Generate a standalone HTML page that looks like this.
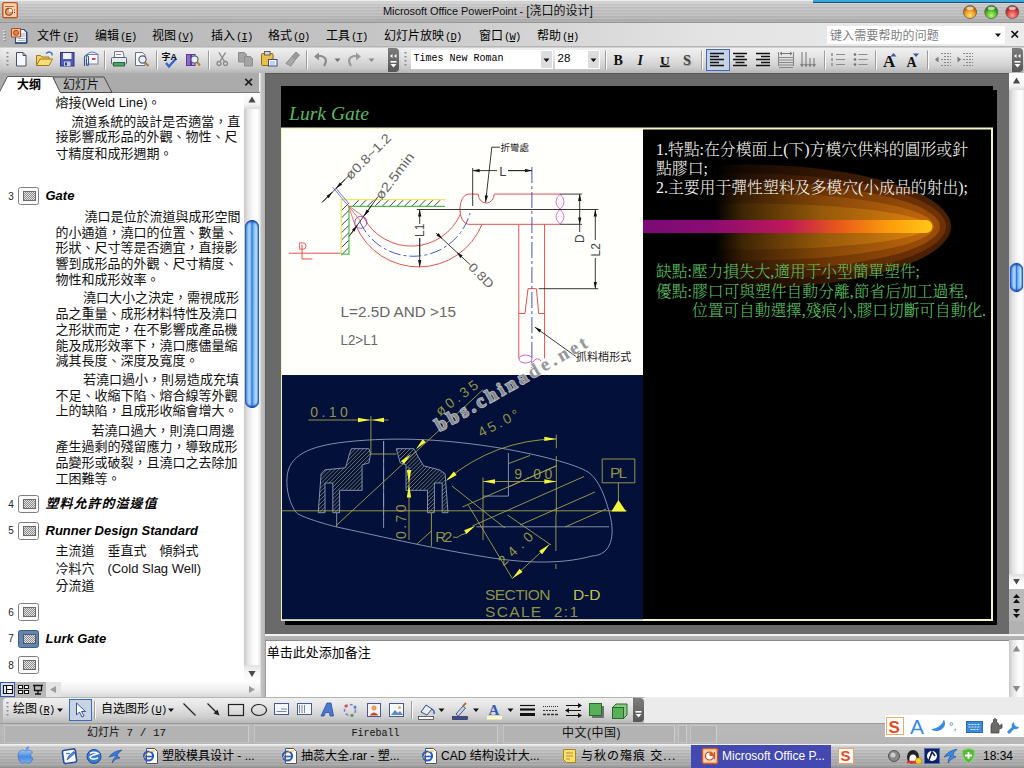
<!DOCTYPE html>
<html lang="zh">
<head>
<meta charset="utf-8">
<title>Microsoft Office PowerPoint - [浇口的设计]</title>
<style>
*{box-sizing:border-box;margin:0;padding:0}
html,body{width:1024px;height:768px;overflow:hidden}
body{position:relative;background:#b4b4b4;font-family:"Liberation Sans","Noto Sans CJK SC",sans-serif;font-size:12px;color:#000}
.abs{position:absolute}
#title{left:0;top:0;width:1024px;height:23px;background:linear-gradient(#f2f2f2 0,#d2d2d2 2px,#c4c4c4 7px,#bbbbbb 16px,#adadad 21px,#969696 23px)}
#title .t{position:absolute;left:383px;top:4px;white-space:nowrap;font-size:11.5px;line-height:15px;color:#111;letter-spacing:0.2px}
.tl{position:absolute;top:5px;width:14px;height:14px;border-radius:50%}
#menu{left:0;top:23px;width:1024px;height:23px;background:linear-gradient(90deg,#b4b4b4 0,#c4c4c4 35%,#e4e4e4 70%,#ececec 100%)}
#menu span.m{position:absolute;top:5.5px;font-size:12px;line-height:15px;white-space:nowrap}
#tb{left:0;top:46px;width:1024px;height:27px;background:linear-gradient(#b4b4b4 0,#b4b4b4 1px,#ececec 2px,#e0e0e0 10px,#c2c2c2 24px,#b0b0b0 27px)}
#left{left:0;top:73px;width:260px;height:624px;background:#ababab}
#outline{left:0;top:92px;width:244px;height:590px;background:#fff;overflow:hidden}
#slidepane{left:265px;top:73px;width:744px;height:561px;background:#6a6a6a;border-top:1px solid #585858;border-left:1px solid #606060}
#notes{left:265px;top:640px;width:744px;height:57px;background:#fff;border-top:1px solid #8c8c8c;border-left:1px solid #a0a0a0}
#draw{left:0;top:697px;width:1024px;height:26px;background:linear-gradient(90deg,#b4b4b4 0,#b4b4b4 644px,#ebebeb 644px)}
#status{left:0;top:723px;width:1024px;height:21px;background:linear-gradient(#9c9c9c 0,#9c9c9c 1px,#b9b9b9 1px,#b6b6b6 100%)}
#task{left:0;top:744px;width:1024px;height:24px;background:linear-gradient(#f2f2f2 0,#f2f2f2 1px,#cfcfcf 2px,#bcbcbc 8px,#adadad 16px,#a4a4a4 22px,#8a8a8a 24px)}

.ol{position:absolute;white-space:nowrap;font:13px/16px "Liberation Sans","Noto Sans CJK TC",sans-serif;color:#111;font-weight:400}
.on{position:absolute;left:7px;width:8px;text-align:center;font:10px/11px "Liberation Sans",sans-serif;color:#222}
.oi{position:absolute;left:18px;width:21px;height:18px;margin-top:-0.7px;border:1px solid #7e7e7e;border-radius:2.5px;background:#fbfbfb}
.oi i{position:absolute;left:3.5px;top:3px;width:13px;height:10px;border:1px solid #6a6a6a;background:conic-gradient(#8c8c8c 25%,#e4e4e4 0 50%,#8c8c8c 0 75%,#e4e4e4 0) 0 0/2px 2px}
.oi.sel{background:#6486ae;border-color:#3c5c86}
.oi.sel i{border-color:#4a5a70}
.oh{position:absolute;left:45.5px;white-space:nowrap;font:italic bold 13px/16px "Liberation Sans","Noto Sans CJK TC",sans-serif;color:#000}

#menu span.m b{font-weight:400;font-family:"Liberation Mono",monospace;font-size:10.5px;letter-spacing:-0.8px;margin-left:1px}
#menu span.m u{text-decoration:underline}

.dt{top:5px;font-size:12px;line-height:15px;white-space:nowrap}
.dt b{font-weight:400;font-family:"Liberation Mono",monospace;font-size:10.5px;letter-spacing:-0.8px;margin-left:1px}
.sp{position:absolute;top:2px;height:18px;border:1px solid;border-color:#c8c8c8 #cdcdcd #c0c0c0 #c4c4c4;background:#b3b3b3}
.st{top:3px;font-size:12px;line-height:15px;white-space:nowrap;color:#111}
.tk{top:4px;font-size:12px;line-height:16px;white-space:nowrap;color:#000}
#title .t1{font-size:11px;letter-spacing:-0.07px}
#title .t2{font-size:12px;letter-spacing:0}
.streak{position:absolute;left:0;top:0;width:100%;height:100%;background:repeating-linear-gradient(rgba(255,255,255,.10) 0,rgba(255,255,255,.10) 1px,rgba(0,0,0,.035) 1px,rgba(0,0,0,.035) 2px,rgba(255,255,255,0) 2px,rgba(255,255,255,0) 3px);pointer-events:none}
</style>
</head>
<body>
<div id="title" class="abs"><div class="streak"></div><span class="t"><span class="t1">Microsoft Office PowerPoint - </span><span class="t2">[浇口的设计]</span></span>
<svg class="abs" style="left:0;top:0" width="1024" height="23" viewBox="0 0 1024 23">
<defs>
<radialGradient id="gO" cx="0.5" cy="0.75" r="0.6"><stop offset="0" stop-color="#ffe070"/><stop offset="0.6" stop-color="#f0a020"/><stop offset="1" stop-color="#b06008"/></radialGradient>
<radialGradient id="gG" cx="0.5" cy="0.75" r="0.6"><stop offset="0" stop-color="#b8f878"/><stop offset="0.6" stop-color="#58c028"/><stop offset="1" stop-color="#2a7a10"/></radialGradient>
<radialGradient id="gR" cx="0.5" cy="0.75" r="0.6"><stop offset="0" stop-color="#ffa090"/><stop offset="0.6" stop-color="#e04848"/><stop offset="1" stop-color="#982020"/></radialGradient>
</defs>
<rect x="813" y="0" width="211" height="2" fill="#38a8d8"/><rect x="813" y="2" width="211" height="1" fill="#1c4c78"/>
<rect x="2.800" y="2.600" width="14.500" height="15.200" rx="1.200" fill="#f8d4b4" stroke="#c4541c" stroke-width="1.400"/><path d="M5,6.500h9" stroke="#c4541c" stroke-width="0.900"/><circle cx="9" cy="11.800" r="3.400" fill="#e8a070" stroke="#9c3c10" stroke-width="1.100"/><path d="M9,11.800 V8.400 A3.400,3.400 0 0 1 12.400,11.800z" fill="#fff"/><path d="M14.500,9.500v1M14.500,12v1" stroke="#7a3010" stroke-width="1"/>
<g stroke="#666" stroke-width="0.8"><circle cx="970" cy="12" r="6.6" fill="url(#gO)"/><circle cx="991.3" cy="12" r="6.6" fill="url(#gG)"/><circle cx="1012.3" cy="12" r="6.6" fill="url(#gR)"/></g>
<g fill="#fff" fill-opacity="0.65"><ellipse cx="970" cy="8.3" rx="3.6" ry="1.8"/><ellipse cx="991.3" cy="8.3" rx="3.6" ry="1.8"/><ellipse cx="1012.3" cy="8.3" rx="3.6" ry="1.8"/></g>
</svg></div>
<div id="menu" class="abs">
<svg class="abs" style="left:0;top:0" width="40" height="23" viewBox="0 0 40 23"><path d="M4,7v1M4,10v1M4,13v1M4,16v1" stroke="#f0f0f0" stroke-width="1.600"/><path d="M5,8v1M5,11v1M5,14v1M5,17v1" stroke="#777" stroke-width="1.200"/><path d="M15.500,6.500 h8.500 l2.500,2.500 v11 h-11z" fill="#f4f8ff" stroke="#34507c" stroke-width="1.200"/><path d="M15,20 h12 M26.800,9 v11" stroke="#2c4670" stroke-width="1.400"/><path d="M21,11h4M21,13h4M18,15.500h7M18,17.500h7" stroke="#88a0d0" stroke-width="0.800"/><rect x="11.500" y="5.500" width="9" height="8.500" rx="0.800" fill="#f4c4a0" stroke="#b84818" stroke-width="1.200"/><circle cx="16" cy="9.800" r="2.600" fill="#e08050" stroke="#9c3c10" stroke-width="0.800"/></svg>
<span class="m" style="left:37px">文件<b>(<u>F</u>)</b></span>
<span class="m" style="left:95px">编辑<b>(<u>E</u>)</b></span>
<span class="m" style="left:152px">视图<b>(<u>V</u>)</b></span>
<span class="m" style="left:211px">插入<b>(<u>I</u>)</b></span>
<span class="m" style="left:268px">格式<b>(<u>O</u>)</b></span>
<span class="m" style="left:326px">工具<b>(<u>T</u>)</b></span>
<span class="m" style="left:384px">幻灯片放映<b>(<u>D</u>)</b></span>
<span class="m" style="left:479px">窗口<b>(<u>W</u>)</b></span>
<span class="m" style="left:537px">帮助<b>(<u>H</u>)</b></span>
<div class="abs" style="left:827px;top:3px;width:178px;height:18px;background:#fff"></div>
<span class="m" style="left:830px;color:#808080;letter-spacing:0.1px">键入需要帮助的问题</span>
<svg class="abs" style="left:990px;top:0" width="34" height="23" viewBox="0 0 34 23"><path d="M5,10.500 h6 l-3,3.500z" fill="#111"/><path d="M21.500,8 l6.500,6.500 m0,-6.500 l-6.500,6.500" stroke="#111" stroke-width="1.7" fill="none"/></svg>
</div>

<div id="tb" class="abs">
<div class="abs" style="left:3px;top:2px;width:396px;height:25px;border-radius:4px 0 0 3px;background:linear-gradient(#efefef,#e2e2e2 35%,#cdcdcd 75%,#b6b6b6)"></div>
<div class="abs" style="left:388px;top:2px;width:11px;height:24px;border-radius:0 4px 4px 0;background:linear-gradient(#7c7c7c,#565656)"></div>
<div class="abs" style="left:401px;top:2px;width:623px;height:25px;border-radius:4px 0 0 3px;background:linear-gradient(#f0f0f0,#e4e4e4 35%,#cfcfcf 75%,#b6b6b6)"></div>
<div class="abs" style="left:1012px;top:2px;width:11px;height:24px;border-radius:0 4px 4px 0;background:linear-gradient(#7c7c7c,#565656)"></div>
<div class="abs" style="left:411px;top:4px;width:142px;height:19px;background:#fff"></div>
<div class="abs" style="left:555px;top:4px;width:45px;height:19px;background:#fff"></div>
<div class="abs" style="left:541px;top:5px;width:11px;height:17px;background:#dcdcdc"></div>
<div class="abs" style="left:588px;top:5px;width:11px;height:17px;background:#dcdcdc"></div>
<div class="abs" style="left:705.5px;top:3px;width:24px;height:22px;background:#c6d2e2;border:1px solid #3b6bbd"></div>
<div class="abs" style="left:413.5px;top:6px;font:10px/14px 'Liberation Mono',monospace;color:#000;white-space:nowrap">Times New Roman</div>
<div class="abs" style="left:557.5px;top:5px;font:11.5px/15px 'Liberation Sans',sans-serif;color:#000">28</div>
<svg class="abs" style="left:0;top:0" width="1024" height="27" viewBox="0 46 1024 27">
<g fill="none">
<path d="M7.5,52v1.500M7.500,56v1.500M7.500,60v1.500M7.500,64v1.500M405.500,52v1.500M405.500,56v1.500M405.500,60v1.500M405.500,64v1.500" stroke="#8a8a8a" stroke-width="2"/>
<!-- new -->
<path d="M16.500,52.500 h6.500 l3,3 v10.500 h-9.500z" fill="#f6f9ff" stroke="#46506c"/><path d="M23,52.500 v3 h3" stroke="#46506c"/>
<!-- open -->
<path d="M36.500,65.500 v-10 h4 l1.500,1.500 h7 v2" fill="#f6d060" stroke="#a07818"/><path d="M36.500,65.500 l3.500,-6.500 h12.500 l-3.500,6.500z" fill="#f8dc78" stroke="#a07818"/><path d="M46,53.500 q3.500,-3 6,0 l0,2" stroke="#3a6aa8" stroke-width="1.300"/>
<!-- save -->
<rect x="60.500" y="52.500" width="13.500" height="13.500" fill="#5058b4" stroke="#2c3480"/><rect x="63" y="53" width="8.500" height="6" fill="#f0f2fa"/><rect x="64" y="61.500" width="6.500" height="4.500" fill="#c8ccec"/><rect x="65" y="62.500" width="2" height="3" fill="#30388c"/>
<!-- mail -->
<rect x="86.500" y="54.500" width="11.500" height="9.500" fill="#f8f8fc" stroke="#7080a8"/><path d="M86.500,54.500 q5.500,-5 11.500,0" stroke="#7080a8"/><rect x="92" y="58" width="3.500" height="2" fill="#d84040"/><path d="M84.500,66 v-8.500 a2,2 0 0 1 4,0 v7 a1,1 0 0 1 -2,0 v-6" stroke="#3a5890" stroke-width="1.100"/>
<path d="M104.500,50.500 v19 M156.500,50.500 v19 M208.500,50.500 v19 M306.500,50.500 v19" stroke="#9c9c9c"/><path d="M105.500,50.500 v19 M157.500,50.500 v19 M209.500,50.500 v19 M307.500,50.500 v19" stroke="#fafafa"/>
<!-- print -->
<path d="M114.500,57 v-5.500 h8.500 l1,5.500" fill="#fdfdfd" stroke="#70788c"/><rect x="111.500" y="57.500" width="15" height="6.500" rx="1" fill="#e4e8f0" stroke="#586078"/><rect x="113.500" y="62.500" width="11" height="3.500" fill="#48a868" stroke="#2a6840"/><path d="M116,54.500 h5" stroke="#8890a0"/>
<!-- preview -->
<path d="M135.500,52.500 h7 l2.500,2.500 v10.500 h-9.500z" fill="#f8faff" stroke="#687088"/><circle cx="142.500" cy="59.500" r="3.600" fill="#e8f0fc" stroke="#505870" stroke-width="1.100"/><path d="M145,62.500 l3.500,3.500" stroke="#b07828" stroke-width="2"/>
<!-- spell -->
<path d="M166,63 l3,3.500 l7,-8" stroke="#3a62c8" stroke-width="2.400"/>
<!-- research -->
<rect x="186.500" y="54.500" width="4" height="11" fill="#8c6cc8" stroke="#5a3c98"/><rect x="191.500" y="54.500" width="3.500" height="11" fill="#b4a0e0" stroke="#5a3c98"/><circle cx="194.500" cy="59.500" r="3.500" fill="#e4f0fc" stroke="#586078" stroke-width="1.100"/><path d="M197,62 l3,3.500" stroke="#b88020" stroke-width="2"/>
<!-- cut -->
<path d="M219,52.500 l5.500,9 M225.500,52.500 l-5.500,9" stroke="#8a8a8a" stroke-width="1.400"/><circle cx="219" cy="63.500" r="2" stroke="#8a8a8a" stroke-width="1.300"/><circle cx="225.500" cy="63.500" r="2" stroke="#8a8a8a" stroke-width="1.300"/>
<!-- copy -->
<path d="M238.500,52.500 h6 l2,2 v7.500 h-8z" fill="#a4a4a4" stroke="#8c8c8c"/><path d="M244.500,56.500 h6 l2,2 v7.500 h-8z" fill="#a4a4a4" stroke="#8c8c8c"/>
<!-- paste -->
<rect x="261.500" y="53.500" width="11.500" height="12" rx="1" fill="#e8c048" stroke="#8c6c14"/><rect x="264.500" y="51.500" width="5.500" height="3.500" fill="#d8d8d8" stroke="#606060"/><rect x="268.500" y="59.500" width="8.500" height="6.500" fill="#f4f8ff" stroke="#3a4a8c"/><path d="M270,62h5M270,64h5" stroke="#8098d0" stroke-width="0.800"/>
<!-- format painter -->
<path d="M296,52 l3.500,3 l-4,4.500 l-3.500,-3z" fill="#9a9a9a" stroke="#8a8a8a"/><path d="M292,56.500 l3.500,3 l-4.500,6.500 l-5,-2.500z" fill="#a8a8a8" stroke="#8c8c8c"/>
<!-- undo / redo -->
<path d="M324,66 q5,-8 -3,-10 l-3,0" stroke="#8c8c8c" stroke-width="2.200"/><path d="M314,56.500 l5,-4 v8z" fill="#8c8c8c"/><path d="M334.500,58.500 h6 l-3,3.500z" fill="#707070"/>
<path d="M351,66 q-5,-8 3,-10 l3,0" stroke="#9a9a9a" stroke-width="2.200"/><path d="M361,56.500 l-5,-4 v8z" fill="#9a9a9a"/><path d="M368.500,58.500 h6 l-3,3.500z" fill="#8a8a8a"/>
<!-- overflow chevrons -->
<g fill="#fff"><path d="M390,56 l2.500,-2 v4z M394,56 l2.500,-2 v4z M1014,56 l2.500,-2 v4z M1018,56 l2.500,-2 v4z"/><rect x="390.500" y="61" width="6" height="1.600"/><path d="M390.500,64 h6 l-3,3.500z"/><rect x="1014.500" y="61" width="6" height="1.600"/><path d="M1014.500,64 h6 l-3,3.500z"/></g>
<path d="M543.500,58.500 h6 l-3,3.500z M590.500,58.500 h6 l-3,3.500z" fill="#111"/>
<path d="M605.500,50.500 v19 M701.500,50.500 v19 M824.500,50.500 v19 M875.500,50.500 v19 M927.500,50.500 v19" stroke="#9c9c9c"/><path d="M606.500,50.500 v19 M702.500,50.500 v19 M825.500,50.500 v19 M876.500,50.500 v19 M928.500,50.500 v19" stroke="#fafafa"/>
<!-- align icons -->
<path d="M710,53.500h14M710,56.500h9M710,59.500h14M710,62.500h9M710,65.500h14" stroke="#111" stroke-width="1.300"/>
<path d="M733,53.500h14M735.500,56.500h9M733,59.500h14M735.500,62.500h9M733,65.500h14" stroke="#111" stroke-width="1.300"/>
<path d="M756,53.500h14M761,56.500h9M756,59.500h14M761,62.500h9M756,65.500h14" stroke="#111" stroke-width="1.300"/>
<path d="M779,57.500h14M779,60h14M779,62.500h14M779,65h14M779,67.500h14 M778.500,52v14 M793.500,52v14" stroke="#8a8a8a" stroke-width="1.100"/><path d="M780,53.500 h12 M782,52 l-2,1.500 l2,1.500 M790,52 l2,1.500 l-2,1.500" stroke="#777" stroke-width="1"/>
<path d="M802,52v14M806,52v14M810,58v8 M800.500,64 l1.500,2.500 l1.500,-2.500 M804.500,64 l1.500,2.500 l1.500,-2.500 M808.500,64 l1.500,2.500 l1.500,-2.500 M814,58v8 M812.500,64 l1.500,2.500 l1.500,-2.500" stroke="#808080" stroke-width="1.100"/>
<!-- lists -->
<path d="M836,54.500h9M836,59.500h9M836,64.500h9" stroke="#8c8c8c" stroke-width="1.200"/><path d="M832,53v3M832,58v3M832,63v3" stroke="#808080" stroke-width="1.300"/>
<path d="M858.500,54.500h9M858.500,59.500h9M858.500,64.500h9" stroke="#8c8c8c" stroke-width="1.200"/><circle cx="855" cy="54.500" r="1.300" fill="#707070"/><circle cx="855" cy="59.500" r="1.300" fill="#707070"/><circle cx="855" cy="64.500" r="1.300" fill="#707070"/>
<path d="M893.500,53 l3,3.500 h-6z" fill="#3a5a9c"/><path d="M913,57 l3,-3.500 h-6z" fill="#3a5a9c" transform="translate(3,0)"/>
<!-- indent -->
<path d="M941,53.500h10M944,56.500h7M941,59.500h10M944,62.500h7M941,65.500h10" stroke="#8a8a8a" stroke-width="1.200" stroke-dasharray="2 1"/><path d="M938.500,56.500 l-3.500,3 l3.500,3z" fill="#7a7a7a"/>
<path d="M963,53.500h10M966,56.500h7M963,59.500h10M966,62.500h7M963,65.500h10" stroke="#8a8a8a" stroke-width="1.200" stroke-dasharray="2 1"/><path d="M957.500,56.500 l3.500,3 l-3.500,3z" fill="#7a7a7a"/>
</g>
<g font-family="'Liberation Serif',serif" font-weight="bold" fill="#111">
<text x="613.500" y="65" font-size="14">B</text>
<text x="637.500" y="65" font-size="14" font-style="italic">I</text>
<text x="660" y="64.500" font-size="13.500" text-decoration="underline">U</text>
<text x="683" y="65" font-size="14" fill="#444" style="text-shadow:1px 1px 1px #999">S</text>
<text x="883" y="67" font-size="17">A</text>
<text x="906.500" y="67" font-size="14">A</text>
<text x="161.500" y="59.500" font-size="9" font-family="'Liberation Sans','Noto Sans CJK SC',sans-serif">字A</text>
</g>
<path d="M660,66.500 h9" stroke="#111" stroke-width="1.200"/>
</svg>
</div>

<div id="left" class="abs"></div>
<div id="outline" class="abs" lang="zh-TW">
<div class="ol" style="top:3.1px;left:55.4px">熔接(Weld Line)。</div>
<div class="ol" style="top:21.7px;left:71.2px">流道系統的設計是否適當，直</div>
<div class="ol" style="top:37.4px;left:55.4px">接影響成形品的外觀、物性、尺</div>
<div class="ol" style="top:53.7px;left:55.4px">寸精度和成形週期。</div>
<div class="ol" style="top:117.2px;left:84.4px">澆口是位於流道與成形空間</div>
<div class="ol" style="top:132.8px;left:55.4px">的小通道，澆口的位置、數量、</div>
<div class="ol" style="top:148.3px;left:55.4px">形狀、尺寸等是否適宜，直接影</div>
<div class="ol" style="top:163.9px;left:55.4px">響到成形品的外觀、尺寸精度、</div>
<div class="ol" style="top:179.7px;left:55.4px">物性和成形效率。</div>
<div class="ol" style="top:197.7px;left:83.0px">澆口大小之決定，需視成形</div>
<div class="ol" style="top:213.5px;left:55.4px">品之重量、成形材料特性及澆口</div>
<div class="ol" style="top:229.6px;left:55.4px">之形狀而定，在不影響成產品機</div>
<div class="ol" style="top:245.5px;left:55.4px">能及成形效率下，澆口應儘量縮</div>
<div class="ol" style="top:261.4px;left:55.4px">減其長度、深度及寬度。</div>
<div class="ol" style="top:279.9px;left:83.0px">若澆口過小，則易造成充填</div>
<div class="ol" style="top:295.6px;left:55.4px">不足、收縮下陷、熔合線等外觀</div>
<div class="ol" style="top:311.4px;left:55.4px">上的缺陷，且成形收縮會增大。</div>
<div class="ol" style="top:331.4px;left:91.6px">若澆口過大，則澆口周邊</div>
<div class="ol" style="top:347.2px;left:55.4px">產生過剩的殘留應力，導致成形</div>
<div class="ol" style="top:362.9px;left:55.4px">品變形或破裂，且澆口之去除加</div>
<div class="ol" style="top:378.7px;left:55.4px">工困難等。</div>
<div class="ol" style="top:450.9px;left:55.4px">主流道　垂直式　傾斜式</div>
<div class="ol" style="top:468.6px;left:55.4px">冷料穴　(Cold Slag Well)</div>
<div class="ol" style="top:486.2px;left:55.4px">分流道</div>
<div class="on" style="top:98.8px">3</div><div class="oi" style="top:95.8px"><i></i></div>
<div class="oh" style="top:96.3px">Gate</div>
<div class="on" style="top:406.7px">4</div><div class="oi" style="top:403.7px"><i></i></div>
<div class="oh" style="top:404.2px;letter-spacing:1px">塑料允許的溢邊值</div>
<div class="on" style="top:433.4px">5</div><div class="oi" style="top:430.4px"><i></i></div>
<div class="oh" style="top:430.9px">Runner Design Standard</div>
<div class="on" style="top:514.7px">6</div><div class="oi" style="top:511.7px"><i></i></div>
<div class="on" style="top:541.3px">7</div><div class="oi sel" style="top:538.3px"><i></i></div>
<div class="oh" style="top:538.8px">Lurk Gate</div>
<div class="on" style="top:568.0px">8</div><div class="oi" style="top:565.0px"><i></i></div>
</div>
<div class="abs" style="left:244px;top:92px;width:16px;height:590px;background:linear-gradient(90deg,#c8c8c8 0,#e4e4e4 25%,#fafafa 60%,#fff 85%,#e8e8e8 100%)"></div>
<div class="abs" style="left:244px;top:92px;width:16px;height:17px;background:linear-gradient(#fff,#f4f4f4 70%,#dcdcdc)"></div>
<svg class="abs" style="left:244px;top:92px" width="16" height="17"><path d="M8,4.5 L11.6,10.5 H4.4z" fill="#4a4a4a"/></svg>
<svg class="abs" style="left:0;top:73px" width="260" height="20" viewBox="0 0 260 20">
<path d="M0,19.5 H260" stroke="#7a7a7a" stroke-width="1"/>
<path d="M59.5,19.5 L59.5,19 L53,4 H104 L112,19.5z" fill="#b3b3b3" stroke="#4a4a4a" stroke-width="1"/>
<path d="M-1,20 L7.5,3.500 H52.5 L60.5,20z" fill="#fff" stroke="#5a5a5a" stroke-width="1"/>
<rect x="0" y="19" width="60" height="1.5" fill="#fff"/>
<text x="17" y="16" font-family="'Liberation Sans','Noto Sans CJK SC',sans-serif" font-weight="bold" font-size="12" fill="#000">大纲</text>
<text x="63" y="16" font-family="'Liberation Sans','Noto Sans CJK SC',sans-serif" font-size="12" fill="#111">幻灯片</text>
<path d="M245.300,5.800 l6.700,6.600 m0,-6.600 l-6.700,6.600" stroke="#222" stroke-width="1.700" fill="none"/><path d="M259.500,0 V19" stroke="#f4f4f4" stroke-width="1"/>
</svg>
<div class="abs" style="left:244px;top:665px;width:16px;height:17px;background:linear-gradient(#e0e0e0,#f6f6f6 40%,#fff)"></div>
<svg class="abs" style="left:244px;top:665px" width="16" height="17"><path d="M8,12 L11.6,6 H4.4z" fill="#4a4a4a"/></svg>
<div class="abs" style="left:245px;top:220px;width:14px;height:188px;border-radius:7px;background:linear-gradient(90deg,#2a52b8 0,#5a9cf0 10%,#b4dcfc 30%,#7ab4f4 42%,#3474e4 50%,#6cb0f6 60%,#b8e4fe 80%,#6aa4ea 92%,#2a52b0 100%);box-shadow:inset 0 2px 2px #2048a8,inset 0 -2px 2px #2048a8"></div>
<div class="abs" style="left:0;top:682px;width:260px;height:15px;background:linear-gradient(#fdfdfd,#ececec 60%,#d8d8d8)"></div>
<div class="abs" style="left:0;top:682px;width:46px;height:15px;background:#b9b9b9"></div>
<svg class="abs" style="left:0;top:682px" width="260" height="15" viewBox="0 0 260 15">
<rect x="0.5" y="0.5" width="14" height="14" fill="#d4e0f0" stroke="#3a5a94"/>
<path d="M3.5,3.5 h9 v8 h-9z M6.5,3.5 v8 M6.5,7.5 h6" fill="#fff" stroke="#111" stroke-width="1.2"/>
<path d="M18.5,3.5 h4 v3 h-4z M24.5,3.5 h4 v3 h-4z M18.5,8.5 h4 v3 h-4z M24.5,8.5 h4 v3 h-4z" fill="#fff" stroke="#111" stroke-width="1.1"/>
<path d="M33,3.5 h10 M34.5,3.5 v5 h7 v-5 M38,8.5 v3 M35,12 h6" fill="none" stroke="#111" stroke-width="1.3"/>
<rect x="46" y="0" width="15" height="15" fill="#e4e4e4"/>
<path d="M50,7.5 L56,4 V11z" fill="#9a9a9a"/>
<path d="M255,7.5 L249,4 V11z" fill="#9a9a9a"/>
</svg>

<div id="slidepane" class="abs"></div>
<svg id="slide" class="abs" style="left:281px;top:86px" width="716" height="539" viewBox="281 86 716 539">
<defs>
<linearGradient id="fbar" x1="0" x2="1" y1="0" y2="0">
<stop offset="0" stop-color="#7a0a78"/><stop offset="0.25" stop-color="#8c0c70"/><stop offset="0.5" stop-color="#c01858"/><stop offset="0.68" stop-color="#e85a18"/><stop offset="0.85" stop-color="#fc9c0c"/><stop offset="1" stop-color="#ffc818"/>
</linearGradient>
<linearGradient id="fade" x1="0" x2="1" y1="0" y2="0">
<stop offset="0" stop-color="#fff" stop-opacity="0"/><stop offset="0.12" stop-color="#fff" stop-opacity="0.3"/><stop offset="0.45" stop-color="#fff" stop-opacity="0.7"/><stop offset="0.85" stop-color="#fff" stop-opacity="1"/>
</linearGradient>
<mask id="fm" maskUnits="userSpaceOnUse" x="640" y="150" width="340" height="150"><rect x="715" y="150" width="240" height="150" fill="url(#fade)"/></mask>
<marker id="ah" viewBox="0 0 10 6" refX="10" refY="3" markerWidth="8" markerHeight="4.6" orient="auto-start-reverse"><path d="M0,0.6 L10,3 L0,5.4z" fill="#111"/></marker>
<marker id="ay" viewBox="0 0 12 6" refX="12" refY="3" markerWidth="12" markerHeight="5" orient="auto-start-reverse"><path d="M0,0.3 L12,3 L0,5.7z" fill="#f4f43a"/></marker>
</defs>
<rect x="285" y="90" width="712" height="535" fill="#000"/>
<rect x="281" y="86" width="712" height="535" fill="#000"/>
<rect x="282" y="128.5" width="710" height="491.5" fill="none" stroke="#f4f4c0" stroke-width="2"/>
<rect x="282" y="129" width="361" height="246" fill="#fffffb"/>
<rect x="282" y="375" width="361" height="244.5" fill="#02103a"/>
<rect x="282" y="619.3" width="361" height="1.5" fill="#d8d8d0"/>
<text x="289" y="119.7" font-family="'Liberation Serif',serif" font-style="italic" font-size="19.5" fill="#5cb860" textLength="80" lengthAdjust="spacingAndGlyphs">Lurk Gate</text>
<g mask="url(#fm)">
<ellipse cx="745" cy="226.5" rx="206" ry="62" fill="#4a2004"/>
<ellipse cx="745" cy="226.5" rx="201" ry="53" fill="#6e3206"/>
<ellipse cx="745" cy="226.5" rx="195" ry="44" fill="#984c08"/>
<ellipse cx="745" cy="226.5" rx="189" ry="34" fill="#bc640c"/>
<ellipse cx="745" cy="226.5" rx="183" ry="23" fill="#d8800e"/>
</g>
<path d="M643,220 H926 a6.5,6.5 0 0 1 0,13 H643z" fill="url(#fbar)"/>
<g font-family="'Liberation Serif','Noto Serif CJK TC',serif" font-size="16" font-weight="300" fill="#f6f6f2">
<text x="656" y="154.5" textLength="312" lengthAdjust="spacingAndGlyphs">1.特點:在分模面上(下)方模穴供料的圓形或針</text>
<text x="656" y="173.5" textLength="52" lengthAdjust="spacingAndGlyphs">點膠口;</text>
<text x="656" y="192.5" textLength="312" lengthAdjust="spacingAndGlyphs">2.主要用于彈性塑料及多模穴(小成品的射出);</text>
</g>
<g font-family="'Liberation Serif','Noto Serif CJK TC',serif" font-size="16" font-weight="300" fill="#5cc864">
<text x="656" y="277" textLength="264" lengthAdjust="spacingAndGlyphs">缺點:壓力損失大,適用于小型簡單塑件;</text>
<text x="656" y="297" textLength="312" lengthAdjust="spacingAndGlyphs">優點:膠口可與塑件自動分離,節省后加工過程,</text>
<text x="692" y="316" textLength="294" lengthAdjust="spacingAndGlyphs">位置可自動選擇,殘痕小,膠口切斷可自動化.</text>
</g>
<g fill="none" stroke-width="1">
<path d="M289,253.2 H341.2 M302,244.5 V259 H312.3" stroke="#e45050"/>
<path d="M299.6,242.8 H303 a3,3.2 0 0 1 0,6.4 H299.6z" stroke="#e45050" stroke-width="0.9"/>
<path d="M352.5,206.4 l6.9,-6.9 M359.9,206.4 l6.9,-6.9 M367.3,206.4 l6.9,-6.9 M374.7,206.4 l6.9,-6.9 M382.1,206.4 l6.9,-6.9 M389.5,206.4 l6.9,-6.9 M396.9,206.4 l6.9,-6.9 M404.3,206.4 l6.9,-6.9 M411.7,206.4 l6.9,-6.9 M419.1,206.4 l6.9,-6.9 M426.5,206.4 l6.9,-6.9 M433.9,206.4 l6.9,-6.9 M341.2,210.8 l7.8,-7.8 M341.2,218.2 l7.8,-7.8 M341.2,225.6 l7.8,-7.8 M341.2,233.0 l7.8,-7.8 M341.2,240.4 l7.8,-7.8 M341.2,247.8 l7.8,-7.8 M341.2,255.2 l7.8,-7.8" stroke="#283060" stroke-width="0.9"/>
<path d="M341.2,254.2 V199.6 H445.1" stroke="#ece85c" stroke-width="1.3"/>
<path d="M341.2,254.2 H349 V206.4 H445" stroke="#48c048" stroke-width="1.2"/>
<path d="M356,226 A68.4,68.4 0 0 0 482,224.3" stroke="#e45050"/>
<path d="M364,218 A53.8,53.8 0 0 0 460.5,214" stroke="#e45050"/>
<path d="M360,222 A58.7,58.7 0 0 0 470,213" stroke="#4058d0" stroke-dasharray="12 3 3 3"/>
<path d="M348.3,205.5 L355.5,226.5 M348.3,205.5 L366,218.5 M348.3,205.5 L361,222" stroke="#e45050" stroke-width="0.8"/>
<circle cx="360.8" cy="222.3" r="6" stroke="#9850d0"/>
<path d="M347.2,204.600 L332.700,187.200 M349,203.800 L335.800,188" stroke="#5060c8" stroke-width="0.8"/>
<path d="M560.2,194.1 H494.2 A8,9 0 0 1 478.2,194.1 H468.4 A8.5,15.1 0 0 0 468.4,224.3 H560.2" stroke="#e45050"/>
<path d="M518.8,224.3 V358.4 M544.6,224.3 V358.4 M518.8,313.5 H525 L528,288.7 H536.4 L538.7,313.5 H544.6" stroke="#e45050"/>
<path d="M560,194.1 q8,7.6 0,15.2 q-8,-7.6 0,-15.2 M560,209.3 q8,7.5 0,15 q-8,-7.5 0,-15" stroke="#d048d8" stroke-width="0.8"/>
<ellipse cx="525.5" cy="359" rx="6.5" ry="4" stroke="#d048d8" stroke-width="0.9"/><path d="M533,362 q4,-6 8,-1" stroke="#d048d8" stroke-width="0.9"/>
<path d="M531.9,167 V368" stroke="#4850b8" stroke-dasharray="16 3 3 3"/>
<g stroke="#222" stroke-width="0.9">
<path d="M416.8,209.5 H598.3 M560.2,194.1 H582 M560.2,224.3 H582 M538.7,288.7 H598.3 M472.7,168 V206"/>
<path d="M472.7,170.6 H497 M508,170.6 H531.9" marker-start="url(#ah)"/>
<path d="M531.9,170.6 H508" marker-start="url(#ah)"/>
<path d="M579.7,209 V194.1" marker-end="url(#ah)"/><path d="M579.7,209 V224.3" marker-end="url(#ah)"/><path d="M579.7,224.3 V232"/>
<path d="M595.3,240 V209.5" marker-end="url(#ah)"/><path d="M595.3,258 V288.7" marker-end="url(#ah)"/>
<path d="M419.7,224 V209.7" marker-end="url(#ah)"/><path d="M419.7,238 V266.9" marker-end="url(#ah)"/><path d="M419.7,238 V255" />
<path d="M500,147.2 H491.8 L485.6,202.3" marker-end="url(#ah)"/>
<path d="M470.3,264.8 L456.5,252" marker-end="url(#ah)"/><path d="M436,233 L442.5,239" marker-end="url(#ah)"/><path d="M456.5,252 L442.5,239"/>
<path d="M575.8,356.4 L534.8,327.1" marker-end="url(#ah)"/>
<path d="M321.700,202.800 L349.800,174.700"/><path d="M323,201.500 L332.300,192.200" marker-end="url(#ah)"/><path d="M345,179.500 L336.200,188.300" marker-end="url(#ah)"/>
<path d="M349,236.500 L378,196.600"/><path d="M351,233.900 L357.200,225.300" marker-end="url(#ah)"/><path d="M372,204.900 L363.900,216.100" marker-end="url(#ah)"/>
</g>
</g>
<g font-family="'Liberation Sans',sans-serif" fill="#666" font-size="15.5">
<text x="340.5" y="316.7" textLength="115.5" lengthAdjust="spacingAndGlyphs">L=2.5D AND &gt;15</text>
<text x="340.5" y="344.6" textLength="37.5" lengthAdjust="spacingAndGlyphs">L2&gt;L1</text>
<text font-size="13" transform="translate(350.5,180.5) rotate(-45)" textLength="59" lengthAdjust="spacingAndGlyphs">ø0.8~1.2</text>
<text font-size="13" transform="translate(381.5,200.5) rotate(-52.5)" textLength="55" lengthAdjust="spacingAndGlyphs">ø2.5min</text>
<text font-size="12.5" transform="translate(467.5,268) rotate(45)" textLength="30" lengthAdjust="spacingAndGlyphs">0.8D</text>
<text font-size="13" x="499.3" y="176" fill="#444">L</text>
<text font-size="12" transform="translate(584.3,243) rotate(-90)" fill="#444">D</text>
<text font-size="12" transform="translate(600,256.5) rotate(-90)" fill="#444">L2</text>
<text font-size="12" transform="translate(424.3,237) rotate(-90)" fill="#444">L1</text>
</g>
<g font-family="'Liberation Sans','Noto Sans CJK TC',sans-serif" fill="#222">
<text x="500.6" y="151.3" font-size="9.6" textLength="28.5" lengthAdjust="spacingAndGlyphs">折彎處</text>
<text x="575.8" y="361" font-size="11.2" textLength="55.7" lengthAdjust="spacingAndGlyphs">抓料梢形式</text>
</g>
<g fill="none" stroke-width="1">
<path d="M287,478 C288,455 310,446 345,442 C400,436 450,440 500,448 C540,455 575,464 588,472 C600,480 606,500 610,515 C615,535 612,555 592,556 C560,565 520,563 480,556 C430,548 370,534 337.7,527.2 C320,523 300,516 296.7,513.1 C290,505 286,490 287,478z" stroke="#8e9cb8" stroke-width="0.9"/>
<path d="M336.7,513 V527 M476.2,526.8 H609 M508.4,453 V496.1 H483 M383.6,441 V520" stroke="#8e9cb8" stroke-width="0.9"/>
<path d="M383.6,441 V528" stroke="#8e9cb8" stroke-dasharray="14 4 4 4" stroke-width="0.9"/>
<clipPath id="cl"><path d="M351.4,448.7 L368.9,448.7 L370.5,454.1 L368.9,462.9 L362.1,464.9 L362.1,490.3 L339.6,490.3 L339.6,512.7 L332.8,512.7 L332.8,483.0 L325.0,483.0 L325.0,512.7 L318.2,512.7 L321.1,473.7 L325.0,469.8 L345.5,467.8 L349.4,454.1z"/></clipPath><clipPath id="cr"><path d="M396.3,448.7 L413.9,448.7 L417.8,456.1 L423.6,465.8 L439.2,469.8 L445.1,473.7 L448.0,512.7 L442.2,512.7 L442.2,483.0 L434.4,483.0 L434.4,512.7 L427.5,512.7 L427.5,490.3 L406.0,490.3 L406.0,464.9 L400.2,462.9z"/></clipPath>
<path d="M222.0,520 l80,-80 M225.9,520 l80,-80 M229.8,520 l80,-80 M233.7,520 l80,-80 M237.6,520 l80,-80 M241.5,520 l80,-80 M245.4,520 l80,-80 M249.3,520 l80,-80 M253.2,520 l80,-80 M257.1,520 l80,-80 M261.0,520 l80,-80 M264.9,520 l80,-80 M268.8,520 l80,-80 M272.7,520 l80,-80 M276.6,520 l80,-80 M280.5,520 l80,-80 M284.4,520 l80,-80 M288.3,520 l80,-80 M292.2,520 l80,-80 M296.1,520 l80,-80 M300.0,520 l80,-80 M303.9,520 l80,-80 M307.8,520 l80,-80 M311.7,520 l80,-80 M315.6,520 l80,-80 M319.5,520 l80,-80 M323.4,520 l80,-80 M327.3,520 l80,-80 M331.2,520 l80,-80 M335.1,520 l80,-80 M339.0,520 l80,-80 M342.9,520 l80,-80 M346.8,520 l80,-80 M350.7,520 l80,-80 M354.6,520 l80,-80 M358.5,520 l80,-80 M362.4,520 l80,-80 M366.3,520 l80,-80 M370.2,520 l80,-80 M374.1,520 l80,-80 M378.0,520 l80,-80 M381.9,520 l80,-80 M385.8,520 l80,-80 M389.7,520 l80,-80 M393.6,520 l80,-80 M397.5,520 l80,-80 M401.4,520 l80,-80 M405.3,520 l80,-80 M409.2,520 l80,-80 M413.1,520 l80,-80 M417.0,520 l80,-80 M420.9,520 l80,-80 M424.8,520 l80,-80 M428.7,520 l80,-80 M432.6,520 l80,-80 M436.5,520 l80,-80 M440.4,520 l80,-80 M444.3,520 l80,-80 M448.2,520 l80,-80 M452.1,520 l80,-80 M456.0,520 l80,-80 M459.9,520 l80,-80 M463.8,520 l80,-80 M467.7,520 l80,-80 M471.6,520 l80,-80 M475.5,520 l80,-80 M479.4,520 l80,-80 M483.3,520 l80,-80 M487.2,520 l80,-80 M491.1,520 l80,-80 M495.0,520 l80,-80 M498.9,520 l80,-80 M502.8,520 l80,-80 M506.7,520 l80,-80 M510.6,520 l80,-80 M514.5,520 l80,-80 M518.4,520 l80,-80 M522.3,520 l80,-80 M526.2,520 l80,-80 M530.1,520 l80,-80" stroke="#8c8f66" stroke-width="0.8" clip-path="url(#cl)"/>
<path d="M222.0,520 l80,-80 M225.9,520 l80,-80 M229.8,520 l80,-80 M233.7,520 l80,-80 M237.6,520 l80,-80 M241.5,520 l80,-80 M245.4,520 l80,-80 M249.3,520 l80,-80 M253.2,520 l80,-80 M257.1,520 l80,-80 M261.0,520 l80,-80 M264.9,520 l80,-80 M268.8,520 l80,-80 M272.7,520 l80,-80 M276.6,520 l80,-80 M280.5,520 l80,-80 M284.4,520 l80,-80 M288.3,520 l80,-80 M292.2,520 l80,-80 M296.1,520 l80,-80 M300.0,520 l80,-80 M303.9,520 l80,-80 M307.8,520 l80,-80 M311.7,520 l80,-80 M315.6,520 l80,-80 M319.5,520 l80,-80 M323.4,520 l80,-80 M327.3,520 l80,-80 M331.2,520 l80,-80 M335.1,520 l80,-80 M339.0,520 l80,-80 M342.9,520 l80,-80 M346.8,520 l80,-80 M350.7,520 l80,-80 M354.6,520 l80,-80 M358.5,520 l80,-80 M362.4,520 l80,-80 M366.3,520 l80,-80 M370.2,520 l80,-80 M374.1,520 l80,-80 M378.0,520 l80,-80 M381.9,520 l80,-80 M385.8,520 l80,-80 M389.7,520 l80,-80 M393.6,520 l80,-80 M397.5,520 l80,-80 M401.4,520 l80,-80 M405.3,520 l80,-80 M409.2,520 l80,-80 M413.1,520 l80,-80 M417.0,520 l80,-80 M420.9,520 l80,-80 M424.8,520 l80,-80 M428.7,520 l80,-80 M432.6,520 l80,-80 M436.5,520 l80,-80 M440.4,520 l80,-80 M444.3,520 l80,-80 M448.2,520 l80,-80 M452.1,520 l80,-80 M456.0,520 l80,-80 M459.9,520 l80,-80 M463.8,520 l80,-80 M467.7,520 l80,-80 M471.6,520 l80,-80 M475.5,520 l80,-80 M479.4,520 l80,-80 M483.3,520 l80,-80 M487.2,520 l80,-80 M491.1,520 l80,-80 M495.0,520 l80,-80 M498.9,520 l80,-80 M502.8,520 l80,-80 M506.7,520 l80,-80 M510.6,520 l80,-80 M514.5,520 l80,-80 M518.4,520 l80,-80 M522.3,520 l80,-80 M526.2,520 l80,-80 M530.1,520 l80,-80" stroke="#8c8f66" stroke-width="0.8" clip-path="url(#cr)"/>
<path d="M351.4,448.7 L368.9,448.7 L370.5,454.1 L368.9,462.9 L362.1,464.9 L362.1,490.3 L339.6,490.3 L339.6,512.7 L332.8,512.7 L332.8,483.0 L325.0,483.0 L325.0,512.7 L318.2,512.7 L321.1,473.7 L325.0,469.8 L345.5,467.8 L349.4,454.1z M396.3,448.7 L413.9,448.7 L417.8,456.1 L423.6,465.8 L439.2,469.8 L445.1,473.7 L448.0,512.7 L442.2,512.7 L442.2,483.0 L434.4,483.0 L434.4,512.7 L427.5,512.7 L427.5,490.3 L406.0,490.3 L406.0,464.9 L400.2,462.9z" stroke="#8e9cb8" stroke-width="0.9"/>
<g stroke="#a4a448" stroke-width="0.9">
<path d="M281.5,510.8 H627"/>
<path d="M308.4,420 H388.5 M370.9,416 V454 M370.5,454 H396.3"/>
<path d="M335.7,526 L483,389.7"/>
<path d="M409,467 V540 M431.4,513 V546.3 M417,544 L431.4,531"/>
<path d="M556.3,434.6 V448.3 M556.3,456 V514.7 M555.9,514.7 V551 M555.9,564 V569"/>
<path d="M483,477.6 V540 M483,481.5 H556.3"/>
<path d="M446.9,479.5 Q495,440 556.3,438.9"/>
<path d="M462.5,506.9 L556.3,465.8 M472.3,526 L584,476.5 M508.4,463.6 L530,455.5 M508.4,487 L556,466 M520,525 L595,492 M565,527 L606,509 M452,486 L505,528 M468.4,505.3 L512.3,578.5 M507.5,515 L551,545"/>
<path d="M512.3,578.5 L549.4,544.4"/>
<path d="M602.2,459 H634.8 V482.8 H602.2z M618.4,482.8 V501"/>
<path d="M453,537 q4,2 8,-2 l6,-2"/>
</g>
<g stroke="none" fill="#f4f43a">
<path d="M370.0,420.0 L358.0,422.2 L358.0,417.8z M372.0,420.0 L384.0,417.8 L384.0,422.2z M556.3,438.9 L544.3,441.1 L544.3,436.7z M483.0,481.5 L495.0,479.3 L495.0,483.7z M556.3,481.5 L544.3,483.7 L544.3,479.3z M409.0,483.0 L406.8,470.0 L411.2,470.0z M409.0,484.5 L411.2,497.5 L406.8,497.5z M415.8,449.2 L422.7,439.2 L425.8,442.3z M411.0,454.0 L404.1,464.0 L401.0,460.9z M475.4,525.8 L466.4,534.0 L464.1,530.3z M512.3,578.5 L519.6,568.7 L522.6,571.9z M549.4,544.4 L542.1,554.2 L539.1,551.0z M446.0,481.0 L453.8,471.6 L456.6,475.0z"/>
<path d="M618.4,500 L611.4,511.6 L626.2,511.6z"/>
</g>
</g>
<g font-family="'Liberation Sans',sans-serif" fill="#a4a448" fill-opacity="0.9" font-size="14">
<text x="310.3" y="417" textLength="37.5" lengthAdjust="spacing">0.10</text>
<text transform="translate(440,416.5) rotate(-37)" textLength="49" lengthAdjust="spacing">ø0.35</text>
<text transform="translate(481,437.5) rotate(-27)" textLength="44" lengthAdjust="spacing">45.0°</text>
<text x="514.3" y="478.5" textLength="38" lengthAdjust="spacing">9.00</text>
<text transform="translate(406,539) rotate(-90)" textLength="34.5" lengthAdjust="spacing">0.70</text>
<text x="435.3" y="542.4" font-size="15" textLength="17" lengthAdjust="spacing">R2</text>
<text transform="translate(503.5,566.5) rotate(-43)" textLength="42" lengthAdjust="spacing">24.0</text>
<text x="610" y="477.6" font-size="15.5" textLength="17" lengthAdjust="spacing">PL</text>
<text x="485" y="600" font-size="15.5" textLength="65.5" lengthAdjust="spacing">SECTION</text>
<text x="572.9" y="600" font-size="15.5" fill="#dcdc50" textLength="27.5" lengthAdjust="spacing">D-D</text>
<text x="485" y="616.6" font-size="15.5" textLength="93" lengthAdjust="spacing" xml:space="preserve">SCALE  2:1</text>
</g>
<text transform="translate(439.5,432) rotate(-29.8)" font-family="'Liberation Serif',serif" font-weight="bold" font-size="19" fill="#8a8c90" fill-opacity="0.92" stroke="#f0f0f0" stroke-opacity="0.75" stroke-width="1.6" paint-order="stroke" textLength="172" lengthAdjust="spacing">bbs.chinade.net</text>
</svg>
<div class="abs" style="left:260px;top:73px;width:5px;height:624px;background:linear-gradient(90deg,#e8e8e8 0,#c4c4c4 30%,#b4b4b4 100%)"></div>
<div class="abs" style="left:265px;top:634px;width:759px;height:6px;background:linear-gradient(#f6f6f6 0,#f0f0f0 1.500px,#b6b6b6 2.500px,#aeaeae 100%)"></div>
<div class="abs" style="left:1009px;top:73px;width:15px;height:561px;background:linear-gradient(90deg,#c4c4c4 0,#e2e2e2 25%,#fafafa 60%,#fff 85%,#ececec 100%)"></div>
<div class="abs" style="left:1009px;top:73px;width:15px;height:17px;background:linear-gradient(#fff,#f6f6f6 70%,#dedede)"></div>
<div class="abs" style="left:1009px;top:589px;width:15px;height:45px;background:#bababa"></div><div class="abs" style="left:1009px;top:620.500px;width:15px;height:13.500px;background:#b2b2b2"></div>
<div class="abs" style="left:1009px;top:574px;width:15px;height:15px;background:linear-gradient(#e0e0e0,#f6f6f6 40%,#fff)"></div>
<svg class="abs" style="left:1009px;top:73px" width="15" height="561" viewBox="0 0 15 561">
<path d="M7.500,4.500 L11.100,10.500 H3.900z" fill="#4a4a4a"/>
<path d="M7.500,511.500 L10.800,506 H4.200z" fill="#4a4a4a"/>
<path d="M7.500,521 L11,525 H4z M7.500,526 L11,530 H4z M7.500,540 L11,536 H4z M7.500,545 L11,541 H4z" fill="#111"/>
</svg>
<div class="abs" style="left:1010px;top:263px;width:13px;height:29px;border-radius:6.500px;background:linear-gradient(90deg,#2a52b8 0,#5a9cf0 12%,#b4dcfc 32%,#7ab4f4 44%,#3474e4 50%,#6cb0f6 60%,#b8e4fe 80%,#6aa4ea 92%,#2a52b0 100%);box-shadow:inset 0 2px 2px #2048a8,inset 0 -2px 2px #2048a8,0 0 2px #88a8e0"></div>
<div id="notes" class="abs"><span style="position:absolute;left:0.800px;top:3.500px;font:13px/16px 'Liberation Sans','Noto Sans CJK SC',sans-serif;color:#000;white-space:nowrap">单击此处添加备注</span></div>
<div class="abs" style="left:1009px;top:640px;width:15px;height:57px;background:linear-gradient(90deg,#c8c8c8 0,#e4e4e4 25%,#fafafa 60%,#fff 85%,#ececec 100%)"></div>
<svg class="abs" style="left:1009px;top:640px" width="15" height="57" viewBox="0 0 15 57"><path d="M7.500,5.500 L11.100,11.500 H3.900z" fill="#8a8a8a"/><path d="M7.500,52 L11.100,46 H3.900z" fill="#8a8a8a"/></svg>
<div class="abs" style="left:644px;top:697px;width:380px;height:26px;background:#ebebeb"></div>

<div id="draw" class="abs">
<div class="abs" style="left:3px;top:1px;width:641px;height:25px;border-radius:4px 0 0 3px;background:linear-gradient(#f0f0f0,#e4e4e4 35%,#cfcfcf 75%,#b8b8b8)"></div>
<div class="abs" style="left:633px;top:1px;width:11px;height:24px;border-radius:0 4px 4px 0;background:linear-gradient(#7c7c7c,#565656)"></div>
<div class="abs" style="left:68.500px;top:1.500px;width:23px;height:22px;background:#c9d4e3;border:1px solid #3b6bbd"></div>
<span class="abs dt" style="left:13px">绘图<b>(<u>R</u>)</b></span>
<span class="abs dt" style="left:101px">自选图形<b>(<u>U</u>)</b></span>
<svg class="abs" style="left:0;top:0" width="1024" height="26" viewBox="0 697 1024 26">
<g fill="none">
<path d="M7.500,702v1.500M7.500,706v1.500M7.500,710v1.500M7.500,714v1.500" stroke="#8a8a8a" stroke-width="2"/>
<path d="M57,708.500 h6 l-3,3.500z M168,708.500 h6 l-3,3.500z M438.500,708.500 h6 l-3,3.500z M473,708.500 h6 l-3,3.500z M507.500,708.500 h6 l-3,3.500z" fill="#111"/>
<path d="M76.500,703 v12 l3,-3 l2.500,5 l2,-1 l-2.500,-4.500 h4z" fill="#fff" stroke="#3050a0" stroke-width="1"/>
<path d="M94.500,701v18 M411.500,701v18" stroke="#9c9c9c"/><path d="M95.500,701v18 M412.500,701v18" stroke="#fafafa"/>
<path d="M183.500,703.500 l12,12" stroke="#222" stroke-width="1.200"/>
<path d="M207.500,703.500 l10,10" stroke="#222" stroke-width="1.200"/><path d="M219.500,715.500 l-6,-2 l4,-4z" fill="#222"/>
<rect x="228.500" y="704.500" width="15" height="11" stroke="#222" stroke-width="1.200"/>
<ellipse cx="259" cy="710" rx="7.500" ry="5.500" stroke="#222" stroke-width="1.200"/>
<rect x="274.500" y="703.500" width="14" height="11" fill="#f4f8ff" stroke="#4a5a8c"/><path d="M281,709h6M276.500,711.500h10" stroke="#6878a8" stroke-width="0.900"/>
<rect x="297.500" y="703.500" width="14" height="11" fill="#f4f8ff" stroke="#4a5a8c"/><path d="M299.500,705v8M302,705v8M304.500,705v8" stroke="#6878a8" stroke-width="0.900"/>
<path d="M321,716 l6,-13 l4,0 l2.500,13 l-3.500,0 l-0.500,-3.500 l-4,0 l-1.500,3.500z" fill="#4a7ad0" stroke="#2a4a98" stroke-width="0.800"/>
<circle cx="350" cy="710" r="5.500" stroke="#8a7ad0" stroke-width="1.600" stroke-dasharray="3 2"/><circle cx="346" cy="706" r="1.600" fill="#d05050"/><circle cx="355" cy="707" r="1.600" fill="#4a90d0"/><circle cx="352" cy="715.500" r="1.600" fill="#50a850"/>
<rect x="367.500" y="703.500" width="13" height="13" fill="#f4f4f8" stroke="#4a5a8c"/><circle cx="374" cy="708" r="2.500" fill="#e8a050"/><path d="M369.500,715.500 q4.500,-6 9,0z" fill="#c84830"/>
<rect x="389.500" y="703.500" width="14" height="13" fill="#f4f8ff" stroke="#4a5a8c"/><path d="M391,715 l4,-5 l3,3 l2,-2 l3,4z" fill="#5a88c8"/><circle cx="399.500" cy="707.500" r="1.500" fill="#e8b040"/>
<path d="M421,712 l5,-7 l6,4 l-5,6z" fill="#e8eef8" stroke="#3a4a7c"/><path d="M432,709 q3,2 2,5" stroke="#3a6ac0" stroke-width="1.500"/><rect x="418.500" y="716.500" width="15" height="3" fill="#fff" stroke="#444" stroke-width="0.800"/>
<path d="M456,714 l7,-8 l2.500,2 l-7,8z" fill="#c8d4ec" stroke="#3a4a7c" stroke-width="0.900"/><path d="M463,706 l3,-3" stroke="#a87828" stroke-width="2"/><rect x="452.500" y="716.500" width="15" height="3" fill="#3a4a9c" stroke="#222" stroke-width="0.600"/>
<rect x="487" y="716" width="15" height="3.500" fill="#fafac8"/>
<path d="M520,705.500h15" stroke="#111" stroke-width="1.200"/><path d="M520,709.500h15" stroke="#111" stroke-width="2.200"/><path d="M520,714.500h15" stroke="#111" stroke-width="3"/>
<path d="M543,706.500h15" stroke="#333" stroke-width="1" stroke-dasharray="1 1"/><path d="M543,710.500h15" stroke="#333" stroke-width="1.200" stroke-dasharray="2 1"/><path d="M543,714.500h15" stroke="#333" stroke-width="1.400" stroke-dasharray="3 1"/>
<path d="M566,705.500h15M566,710.500h15M566,715.500h15" stroke="#111" stroke-width="1.200"/><path d="M582,705.500 l-4,-2.500v5z M565,710.500 l4,-2.500v5z M582,715.500 l-4,-2.500v5z" fill="#111"/>
<rect x="592" y="706" width="12" height="12" fill="#707070"/><rect x="589.500" y="703.500" width="12" height="12" fill="#58b058" stroke="#2a6a2a"/>
<path d="M612.500,707.500 l3.500,-3.500 h11 v11 l-3.500,3.500 h-11z" fill="#88c888" stroke="#2a6a2a"/><rect x="612.500" y="707.500" width="11" height="11" fill="#58b058" stroke="#2a6a2a"/>
<g fill="#fff"><rect x="635.500" y="711" width="6" height="1.600"/><path d="M635.500,714 h6 l-3,3.500z"/></g>
</g>
<text x="488.500" y="715" font-family="'Liberation Serif',serif" font-weight="bold" font-size="15" fill="#3a5ab0">A</text>
</svg>
</div>
<div id="status" class="abs">
<div class="sp" style="left:4px;width:245px"></div><div class="sp" style="left:254px;width:244px"></div><div class="sp" style="left:503px;width:172px"></div><div class="sp" style="left:678px;width:9px"></div><div class="sp" style="left:690px;width:27px"></div>
<span class="abs st" style="left:87px;font-family:'Liberation Mono','Noto Sans CJK SC',monospace;font-size:11px">幻灯片 7 / 17</span>
<span class="abs st" style="left:351.500px;font-family:'Liberation Mono',monospace;font-size:10px">Fireball</span>
<span class="abs st" style="left:562px;letter-spacing:0.5px">中文(中国)</span>
</div>
<div id="task" class="abs">
<div class="streak" style="top:2px;height:21px"></div>
<div class="abs" style="left:691px;top:1px;width:140px;height:23px;background:#4349b1"></div>
<span class="abs tk" style="left:162px">塑胶模具设计 - ...</span>
<span class="abs tk" style="left:301px">抽蕊大全.rar - 塑...</span>
<span class="abs tk" style="left:441px">CAD 结构设计大...</span>
<span class="abs tk" style="left:581px;letter-spacing:1px">与秋の殤痕 交...</span>
<span class="abs tk" style="left:722px;color:#fff">Microsoft Office P...</span>
<span class="abs tk" style="left:983px;font-size:12px">18:34</span>
<svg class="abs" style="left:0;top:0" width="1024" height="24" viewBox="0 744 1024 24">
<defs><linearGradient id="apg" x1="0" x2="0" y1="0" y2="1"><stop offset="0" stop-color="#9cc8f8"/><stop offset="0.5" stop-color="#4a88e0"/><stop offset="1" stop-color="#7ab0f0"/></linearGradient></defs>
<path d="M25.500,751 c-2,-1.500 -5,-1.300 -6.500,1 c-1.800,2.800 -0.800,7.500 1.200,10 c1.200,1.500 2.500,1.700 3.800,1 c1.200,-0.600 2,-0.600 3.200,0 c1.300,0.700 2.600,0.400 3.800,-1 c1,-1.200 1.600,-2.500 1.900,-3.600 c-2.600,-1.200 -2.900,-4.800 -0.300,-6.300 c-1.500,-2 -4.500,-2.500 -7.100,-1.100z" fill="url(#apg)" stroke="#3a68c0" stroke-width="0.600"/><path d="M25.500,750.500 c0,-2.500 1.500,-4 3.500,-4.300 c0.200,2.300 -1.300,4 -3.500,4.300z" fill="#5a98e8"/>
<rect x="63" y="749.500" width="13" height="13.500" rx="2" fill="#f4f8ff" stroke="#2a4a98" stroke-width="1.600" transform="rotate(-8 69.500 756)"/><path d="M67,760 l1.500,-4 l5,-4.500 l1.500,1.500 l-5,4.500z" fill="#4a88e0" stroke="#2a4a98" stroke-width="0.600"/><path d="M66,753.500 h4" stroke="#4a88e0" stroke-width="1.200"/>
<circle cx="94" cy="756.500" r="7" fill="#3a7ad0" stroke="#1a4a98"/><path d="M90,753.500 q4,-2.500 8,0 q-7,2 -8,3.500 q1,3.500 8,1" stroke="#fff" stroke-width="1.600" fill="none"/>
<path d="M122,750 q-9,1 -13,7 q5,-2 8,-1 q-4,2 -5,7 q3,-5 8,-5 q-3,-2 -3,-3 q2,-3 5,-5z" fill="#3a78d8" stroke="#1a4a98" stroke-width="0.600"/>
<g><path d="M146.500,748.500 h8 l3,3 v12 h-11z" fill="#fdfdfd" stroke="#555"/><circle cx="148.500" cy="756" r="4.600" fill="none" stroke="#2a5ac8" stroke-width="2"/><path d="M144,756.500 h9" stroke="#2a5ac8" stroke-width="1.600"/><path d="M143,759 q5,-9 12,-8" stroke="#e8b830" stroke-width="1" fill="none"/></g>
<g transform="translate(139,0)"><path d="M146.500,748.500 h8 l3,3 v12 h-11z" fill="#fdfdfd" stroke="#555"/><circle cx="148.500" cy="756" r="4.600" fill="none" stroke="#2a5ac8" stroke-width="2"/><path d="M144,756.500 h9" stroke="#2a5ac8" stroke-width="1.600"/><path d="M143,759 q5,-9 12,-8" stroke="#e8b830" stroke-width="1" fill="none"/></g><g transform="translate(279,0)"><path d="M146.500,748.500 h8 l3,3 v12 h-11z" fill="#fdfdfd" stroke="#555"/><circle cx="148.500" cy="756" r="4.600" fill="none" stroke="#2a5ac8" stroke-width="2"/><path d="M144,756.500 h9" stroke="#2a5ac8" stroke-width="1.600"/><path d="M143,759 q5,-9 12,-8" stroke="#e8b830" stroke-width="1" fill="none"/></g>
<path d="M563.500,749.500 h12 v13 h-9 l-3,-3z" fill="#f8e070" stroke="#a88818"/><path d="M566,753h7M566,756h7M566,759h4" stroke="#a88818" stroke-width="0.900"/>
<rect x="702.500" y="748.500" width="15" height="15" rx="1.500" fill="#f8d0b0" stroke="#d05a20" stroke-width="1.400"/><circle cx="709.500" cy="756" r="4" fill="#fff" stroke="#c84818" stroke-width="1.200"/><path d="M709.500,756 v-4 a4,4 0 0 1 4,4z" fill="#d85a20"/><path d="M714.500,752v7" stroke="#d05a20"/>
<rect x="838.500" y="748.500" width="15" height="15" fill="#fff" stroke="#f0a060"/>
<circle cx="894" cy="756" r="5.500" fill="#888" stroke="#555"/><circle cx="893" cy="755" r="2.500" fill="#ccc"/>
<ellipse cx="913" cy="757" rx="6" ry="7" fill="#222"/><ellipse cx="913" cy="759" rx="3.600" ry="4.500" fill="#fff"/><path d="M907,762 h12" stroke="#e83030" stroke-width="2.500"/><circle cx="918.500" cy="761" r="3.200" fill="#f8d028" stroke="#a86808" stroke-width="0.600"/>
<rect x="924.500" y="748.500" width="15" height="15" fill="#102060" stroke="#4a6ab8"/><circle cx="932" cy="756" r="5" fill="#fff"/><path d="M929,760 l3,-8 l3,4" stroke="#102060" stroke-width="1.600" fill="none"/>
<path d="M957,749 q-9,2 -13,8 q5,-2 7,-1 q-3,2 -3,7 q3,-5 8,-6 q-3,-1 -3,-3 q1,-2 4,-5z" fill="#3a88e0" stroke="#1a4a98" stroke-width="0.600"/>
<path d="M968.500,748.500 q-5,1 -6.500,2 q0,9 6.500,13 q6.500,-4 6.500,-13 q-1.500,-1 -6.500,-2z" fill="#58b838" stroke="#9ad888" stroke-width="1"/><path d="M968.500,752v7M965,755.500h7" stroke="#fff" stroke-width="1.800"/>
</svg>
<span class="abs" style="left:840.500px;top:3px;font:bold 15px/18px 'Liberation Sans',sans-serif;color:#e84a20">S</span>
</div>
<div class="abs" style="left:885px;top:715px;width:139px;height:22px;background:#fff"></div>
<svg class="abs" style="left:885px;top:715px" width="139" height="22" viewBox="885 715 139 22">
<rect x="886.500" y="717.500" width="17" height="17" fill="#fff" stroke="#f0a868"/>
<path d="M944,719.500 q-2.500,8 -13,10 q8,4 13,-2.500 q2,-3.500 0,-7.500z" fill="#3a8ae0"/>
<rect x="966.500" y="721.500" width="16" height="11" fill="#3a8ad8" stroke="#2a6ab8"/><path d="M968.500,724.500h12M968.500,727h12M970.500,729.500h8" stroke="#d8ecfc" stroke-width="1.100" stroke-dasharray="2 1"/>
<path d="M991,733 v-7 q0,-3 2.500,-4 q-1,-3 1.500,-3.500 q2.500,0.500 1.500,3.500 q2.500,1 2.500,4 l3,-2 v4 l-3,1 v4z" fill="#6a6a6a" stroke="#3a3a3a" stroke-width="0.700"/>
<path d="M1008,733 l7,-7" stroke="#3a8ae0" stroke-width="3"/><path d="M1014,722 a3.800,3.800 0 1 0 5,5 l-3,-0.500 l-1.500,-1.500z" fill="#3a8ae0"/>
<text x="949" y="730" font-family="'Liberation Sans',sans-serif" font-size="11" fill="#3a7ad0">°,</text>
<text x="910" y="733.500" font-family="'Liberation Sans',sans-serif" font-size="21" fill="#3a8ae0">A</text>
<text x="888.500" y="732.500" font-family="'Liberation Sans',sans-serif" font-weight="bold" font-size="17" fill="#e84a20">S</text>
</svg>

</body>
</html>
